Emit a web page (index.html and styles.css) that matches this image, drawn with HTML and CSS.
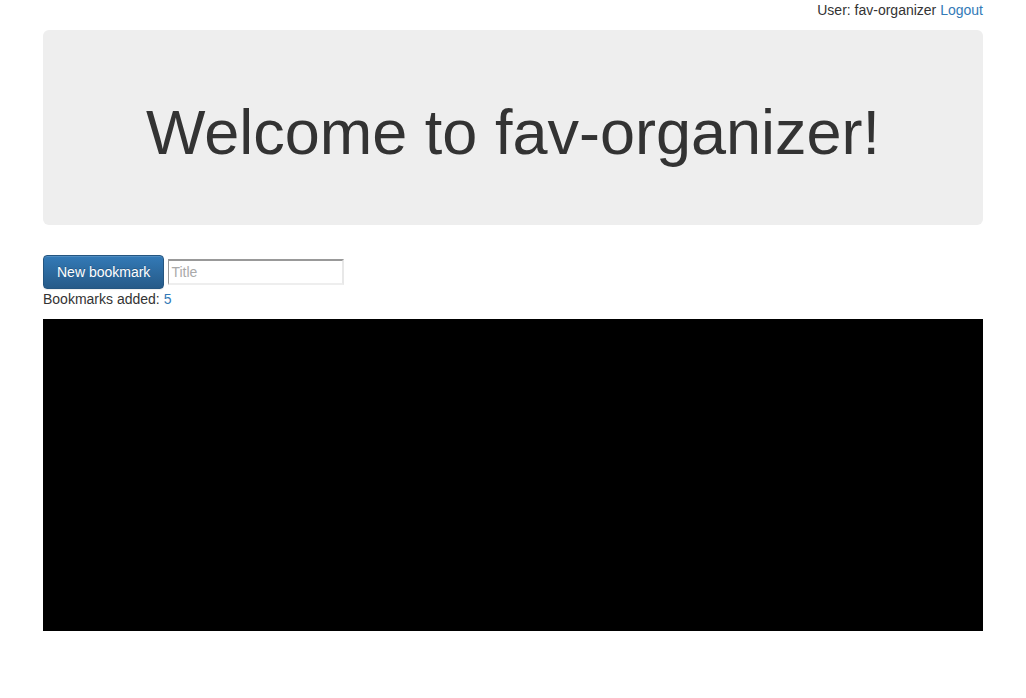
FILE: index.html
```html
<!DOCTYPE html>
<html>
<head>
<meta charset="utf-8">
<title>fav-organizer</title>
<link rel="stylesheet" href="styles.css">
</head>
<body>
<div class="container">
  <div class="userbar">User: fav-organizer <a href="#" class="link">Logout</a></div>
  <div class="jumbotron">
    <h1 class="title">Welcome to fav-organizer!</h1>
  </div>
  <div class="toolbar">
    <button class="btn-primary">New bookmark</button>
    <input class="title-input" type="text" placeholder="Title">
  </div>
  <div class="count">Bookmarks added: <span class="link">5</span></div>
  <div class="canvas"></div>
</div>
</body>
</html>
```

FILE: styles.css
```css
html, body {
  margin: 0;
  padding: 0;
  background: #fff;
}
body {
  font-family: "Liberation Sans", Arial, Helvetica, sans-serif;
  font-size: 14px;
  line-height: 20px;
  color: #333;
}
.container {
  width: 940px;
  margin: 0 auto;
}
.userbar {
  text-align: right;
  height: 20px;
  margin-bottom: 10px;
}
.link {
  color: #337ab7;
  text-decoration: none;
}
.jumbotron {
  background: #eee;
  border-radius: 6px;
  padding: 48px 60px;
  margin-bottom: 30px;
}
.title {
  margin: 20px 0 10px;
  font-size: 63px;
  font-weight: 500;
  line-height: 1.1;
  text-align: center;
  color: #333;
}
.toolbar {
  display: flex;
  align-items: center;
  gap: 4px;
}
.btn-primary {
  font-family: inherit;
  font-size: 14px;
  line-height: 20px;
  padding: 6px 13px;
  color: #fff;
  border: 1px solid #245580;
  border-radius: 4px;
  background: linear-gradient(to bottom, #337ab7 0%, #265a88 100%);
  text-shadow: 0 -1px 0 rgba(0,0,0,0.2);
  box-shadow: inset 0 1px 0 rgba(255,255,255,0.15), 0 1px 1px rgba(0,0,0,0.075);
  cursor: pointer;
}
.title-input {
  box-sizing: border-box;
  width: 176px;
  height: 26px;
  margin: 0;
  padding: 1px 2px;
  font-family: inherit;
  font-size: 14px;
  border-style: solid;
  border-width: 2px;
  border-color: #999 #e8e8e8 #eee #999;
  border-left-width: 1px;
  background: #fff;
}
.title-input::placeholder {
  color: #aaa;
}
.count {
  margin-bottom: 10px;
}
.canvas {
  height: 312px;
  background: #000;
}
```
